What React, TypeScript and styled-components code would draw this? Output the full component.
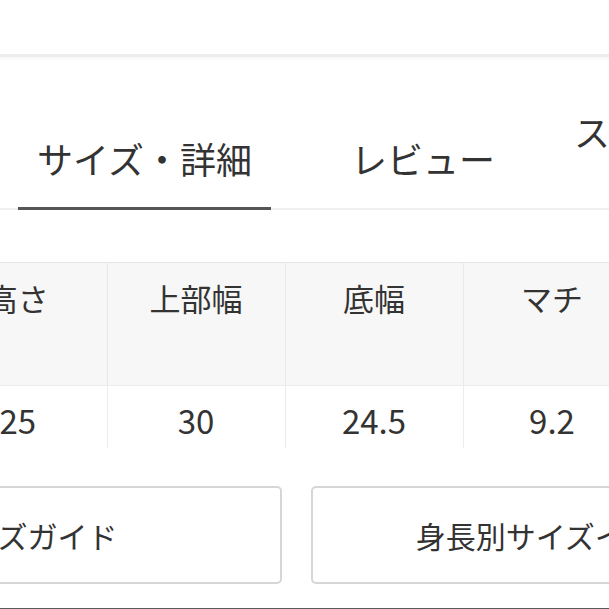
import React from 'react';
import styled, { createGlobalStyle } from 'styled-components';

const GlobalStyle = createGlobalStyle`
  html, body {
    margin: 0;
    padding: 0;
    background: #fff;
    overflow: hidden;
  }
  body {
    font-family: "Noto Sans CJK JP", "Noto Sans", sans-serif;
    color: #333;
  }
`;

const Page = styled.div`
  width: 609px;
  height: 609px;
  overflow: hidden;
  display: flex;
  flex-direction: column;
`;

const TopBar = styled.div`
  height: 54px;
  flex-shrink: 0;
  border-bottom: 3px solid #ededed;
  box-shadow: 0 2px 3px rgba(0, 0, 0, 0.04);
`;

const TabBar = styled.div`
  display: flex;
  align-items: flex-end;
  padding: 48px 0 0 18px;
  border-bottom: 2px solid #f0f0f0;
  flex-shrink: 0;
`;

const Tab = styled.div<{ $active?: boolean; $gap?: number; $raise?: number; $pad?: number }>`
  font-size: 36px;
  line-height: 52px;
  white-space: nowrap;
  margin-left: ${(p) => p.$gap ?? 0}px;
  margin-bottom: -2px;
  padding: 0 ${(p) => p.$pad ?? 19}px ${(p) => 23 + (p.$raise ?? 0)}px;
  border-bottom: 3px solid ${(p) => (p.$active ? '#555' : 'transparent')};
  color: #333;
`;

const TableClip = styled.div`
  margin: 52px 0 0 -71px;
  height: 186px;
  overflow: hidden;
  flex-shrink: 0;
`;

const SizeTable = styled.table`
  border-collapse: collapse;
  table-layout: fixed;
  width: 712px;
  border-top: 1px solid #e6e6e6;
`;

const HeadCell = styled.th`
  width: 178px;
  height: 123px;
  box-sizing: border-box;
  padding: 12px 0 0;
  vertical-align: top;
  background: #f7f7f7;
  font-size: 31px;
  line-height: 45px;
  font-weight: 400;
  text-align: center;
  border-right: 1px solid #e9e9e9;
  border-bottom: 1px solid #ececec;
`;

const ValueCell = styled.td`
  height: 76px;
  box-sizing: border-box;
  padding: 12px 0 0;
  vertical-align: top;
  font-size: 33px;
  line-height: 45px;
  text-align: center;
  border-right: 1px solid #ececec;
`;

const ButtonRow = styled.div`
  display: flex;
  gap: 29px;
  margin: 38px 0 0 -226px;
  flex-shrink: 0;
`;

const GuideButton = styled.div`
  width: 508px;
  height: 98px;
  box-sizing: border-box;
  flex-shrink: 0;
  border: 2px solid #d6d6d6;
  border-radius: 5px;
  display: flex;
  align-items: center;
  justify-content: center;
  font-size: 30px;
  color: #333;
  white-space: nowrap;
`;

const BottomEdge = styled.div`
  margin-top: 24px;
  border-top: 2px solid #5a5a5a;
  height: 10px;
  flex-shrink: 0;
`;

const columns = [
  { label: '高さ', value: '25' },
  { label: '上部幅', value: '30' },
  { label: '底幅', value: '24.5' },
  { label: 'マチ', value: '9.2' },
];

export default function App() {
  return (
    <Page>
      <GlobalStyle />
      <TopBar />
      <TabBar>
        <Tab $active>サイズ・詳細</Tab>
        <Tab $gap={61}>レビュー</Tab>
        <Tab $gap={60} $pad={0} $raise={27}>スタッフコーデ</Tab>
      </TabBar>
      <TableClip>
        <SizeTable>
          <thead>
            <tr>
              {columns.map((c) => (
                <HeadCell key={c.label}>{c.label}</HeadCell>
              ))}
            </tr>
          </thead>
          <tbody>
            <tr>
              {columns.map((c) => (
                <ValueCell key={c.label}>{c.value}</ValueCell>
              ))}
            </tr>
          </tbody>
        </SizeTable>
      </TableClip>
      <ButtonRow>
        <GuideButton>サイズガイド</GuideButton>
        <GuideButton>身長別サイズイメージ</GuideButton>
      </ButtonRow>
      <BottomEdge />
    </Page>
  );
}
